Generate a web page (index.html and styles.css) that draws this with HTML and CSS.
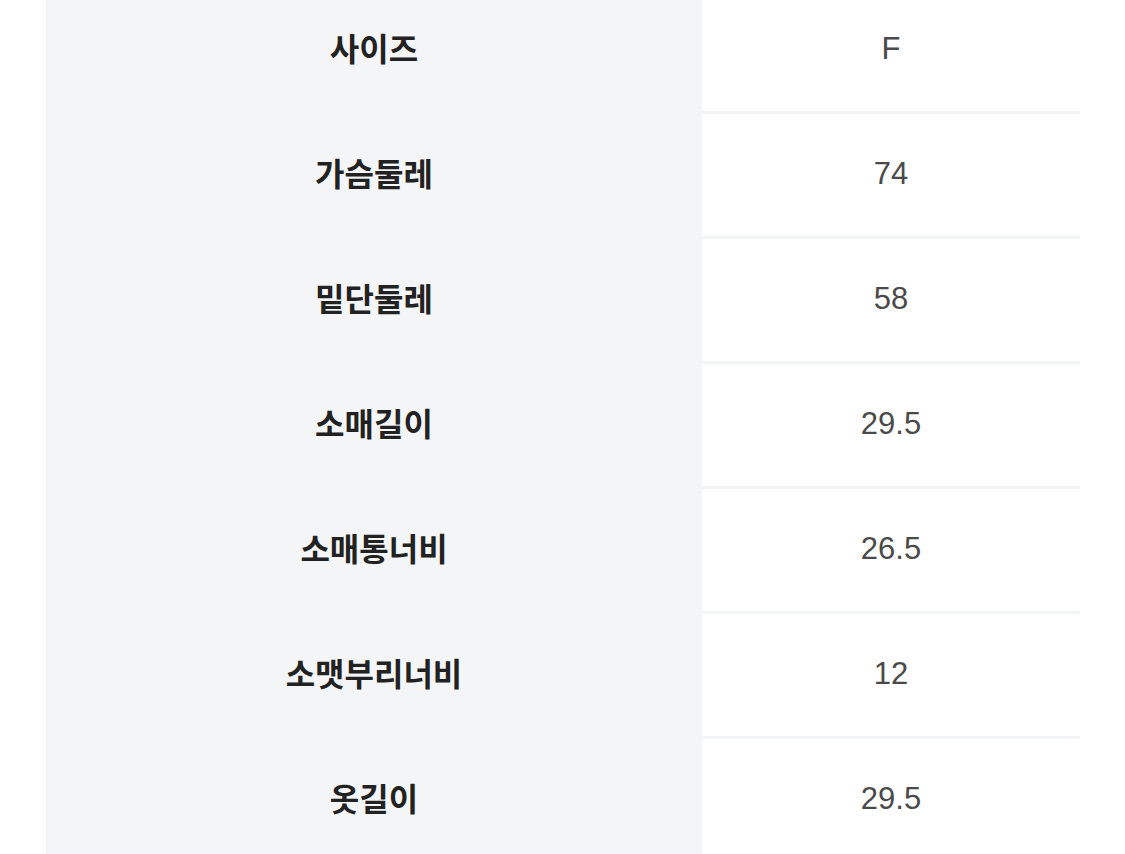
FILE: index.html
```html
<!DOCTYPE html>
<html lang="ko">
<head>
<meta charset="utf-8">
<link rel="stylesheet" href="styles.css">
</head>
<body>
<div class="table">
  <div class="row"><div class="label">사이즈</div><div class="value">F</div></div>
  <div class="row"><div class="label">가슴둘레</div><div class="value">74</div></div>
  <div class="row"><div class="label">밑단둘레</div><div class="value">58</div></div>
  <div class="row"><div class="label">소매길이</div><div class="value">29.5</div></div>
  <div class="row"><div class="label">소매통너비</div><div class="value">26.5</div></div>
  <div class="row"><div class="label">소맷부리너비</div><div class="value">12</div></div>
  <div class="row"><div class="label">옷길이</div><div class="value">29.5</div></div>
</div>
</body>
</html>
```
FILE: styles.css
```css
html, body {
  margin: 0;
  padding: 0;
  background: #ffffff;
  overflow: hidden;
}
.table {
  margin: -14px 45px 0 46px;
  display: flex;
  flex-direction: column;
}
.row {
  display: grid;
  grid-template-columns: 656px 1fr;
  height: 125px;
}
.label {
  background: #f4f5f7;
  display: flex;
  align-items: center;
  justify-content: center;
  font-family: "Noto Sans CJK KR", "Noto Sans", sans-serif;
  font-weight: 700;
  font-size: 32px;
  color: #222222;
  padding-bottom: 3px;
}
.value {
  border-top: 3px solid #f3f4f6;
  display: flex;
  align-items: center;
  justify-content: center;
  font-family: "Liberation Sans", "Noto Sans CJK KR", sans-serif;
  font-size: 31px;
  color: #4a4a4a;
  padding-bottom: 3px;
}
```
